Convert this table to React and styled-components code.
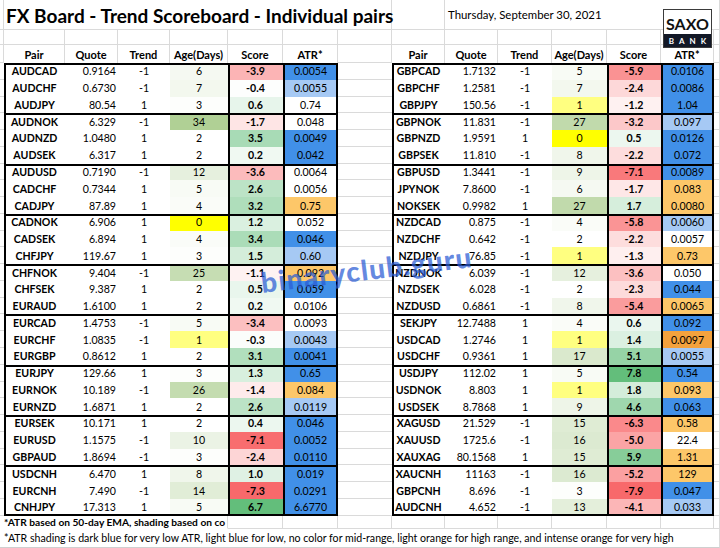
import styled, { createGlobalStyle } from 'styled-components'

const GlobalStyle = createGlobalStyle`
  *, *::before, *::after { box-sizing: border-box; }
  html, body { margin: 0; padding: 0; background: #ffffff; }
  body { font-family: Lato, 'Open Sans', sans-serif; color: #000000; }
`

// column widths of the spreadsheet, left stub .. right tail
const COLS = [4, 61, 53, 52, 58, 55, 55, 54, 53, 53, 54, 55, 54, 53, 6]
const ROW_H = 453 / 27
const GRID = '#dadada'

const LEFT = [
  ['AUDCAD', '0.9164', -1, 6, -3.9, '0.0054', 'D'],
  ['AUDCHF', '0.6730', -1, 7, -0.4, '0.0055', 'L'],
  ['AUDJPY', '80.54', 1, 3, 0.6, '0.74', ''],
  ['AUDNOK', '6.329', -1, 34, -1.7, '0.048', ''],
  ['AUDNZD', '1.0480', 1, 2, 3.5, '0.0049', 'D'],
  ['AUDSEK', '6.317', 1, 2, 0.2, '0.042', 'D'],
  ['AUDUSD', '0.7190', -1, 12, -3.6, '0.0064', ''],
  ['CADCHF', '0.7344', 1, 5, 2.6, '0.0056', ''],
  ['CADJPY', '87.89', 1, 4, 3.2, '0.75', 'O'],
  ['CADNOK', '6.906', 1, 0, 1.2, '0.052', ''],
  ['CADSEK', '6.894', 1, 4, 3.4, '0.046', 'D'],
  ['CHFJPY', '119.67', 1, 3, 1.5, '0.60', 'L'],
  ['CHFNOK', '9.404', -1, 25, -1.1, '0.092', 'O'],
  ['CHFSEK', '9.387', 1, 2, 0.5, '0.059', 'D'],
  ['EURAUD', '1.6100', 1, 2, 0.2, '0.0106', ''],
  ['EURCAD', '1.4753', -1, 5, -3.4, '0.0093', ''],
  ['EURCHF', '1.0835', -1, 1, -0.3, '0.0043', 'L'],
  ['EURGBP', '0.8612', 1, 2, 3.1, '0.0041', 'D'],
  ['EURJPY', '129.66', 1, 3, 1.3, '0.65', 'D'],
  ['EURNOK', '10.189', -1, 26, -1.4, '0.084', 'O'],
  ['EURNZD', '1.6871', 1, 2, 2.6, '0.0119', 'L'],
  ['EURSEK', '10.171', 1, 2, 0.4, '0.046', 'D'],
  ['EURUSD', '1.1575', -1, 10, -7.1, '0.0052', 'D'],
  ['GBPAUD', '1.8694', -1, 3, -2.4, '0.0110', 'D'],
  ['USDCNH', '6.470', 1, 8, 1.0, '0.019', 'D'],
  ['EURCNH', '7.490', -1, 14, -7.3, '0.0291', 'D'],
  ['CNHJPY', '17.313', 1, 5, 6.7, '6.6770', 'D'],
]

const RIGHT = [
  ['GBPCAD', '1.7132', -1, 5, -5.9, '0.0106', 'D'],
  ['GBPCHF', '1.2581', -1, 7, -2.4, '0.0086', 'D'],
  ['GBPJPY', '150.56', -1, 1, -1.2, '1.04', 'D'],
  ['GBPNOK', '11.831', -1, 27, -3.2, '0.097', 'L'],
  ['GBPNZD', '1.9591', 1, 0, 0.5, '0.0126', 'D'],
  ['GBPSEK', '11.810', -1, 8, -2.2, '0.072', 'D'],
  ['GBPUSD', '1.3441', -1, 9, -7.1, '0.0089', 'D'],
  ['JPYNOK', '7.8600', -1, 6, -1.7, '0.083', 'O'],
  ['NOKSEK', '0.9982', 1, 27, 1.7, '0.0080', 'O'],
  ['NZDCAD', '0.875', -1, 4, -5.8, '0.0060', 'L'],
  ['NZDCHF', '0.642', -1, 2, -2.2, '0.0057', ''],
  ['NZDJPY', '76.85', -1, 1, -1.3, '0.73', 'O'],
  ['NZDNOK', '6.039', -1, 12, -3.6, '0.050', ''],
  ['NZDSEK', '6.028', -1, 2, -2.3, '0.044', 'D'],
  ['NZDUSD', '0.6861', -1, 8, -5.4, '0.0065', 'O'],
  ['SEKJPY', '12.7488', 1, 4, 0.6, '0.092', 'D'],
  ['USDCAD', '1.2746', 1, 1, 1.4, '0.0097', 'X'],
  ['USDCHF', '0.9361', 1, 17, 5.1, '0.0055', 'L'],
  ['USDJPY', '112.02', 1, 5, 7.8, '0.54', 'D'],
  ['USDNOK', '8.803', 1, 1, 1.8, '0.093', 'O'],
  ['USDSEK', '8.7868', 1, 9, 4.6, '0.063', 'D'],
  ['XAGUSD', '21.529', -1, 15, -6.3, '0.58', 'O'],
  ['XAUUSD', '1725.6', -1, 16, -5.0, '22.4', ''],
  ['XAUXAG', '80.1568', 1, 15, 5.9, '1.31', 'O'],
  ['XAUCNH', '11163', -1, 16, -5.2, '129', 'O'],
  ['GBPCNH', '8.696', -1, 3, -7.9, '0.047', 'D'],
  ['AUDCNH', '4.652', -1, 13, -4.1, '0.033', 'L'],
]

const ATR_COLORS = {
  D: '#4190e8',
  L: '#a6c9f4',
  O: '#fdc769',
  X: '#f4a23d',
  '': '#ffffff',
}

const HEADERS = ['Pair', 'Quote', 'Trend', 'Age(Days)', 'Score', 'ATR*']

const mix = (a, b, t) => {
  const k = Math.max(0, Math.min(1, t))
  const c = a.map((v, i) => Math.round(v + (b[i] - v) * k))
  return `rgb(${c[0]}, ${c[1]}, ${c[2]})`
}

const WHITE = [255, 255, 255]

const ageColor = (v) => {
  if (v <= 2) return mix([255, 255, 0], WHITE, v / 2)
  return mix(WHITE, [176, 208, 149], (v - 2) / 32)
}

const scoreColor = (v, min, max) => {
  const mid = -0.5
  if (v < mid) return mix(WHITE, [248, 105, 107], (mid - v) / (mid - min))
  return mix(WHITE, [99, 190, 123], (v - mid) / (max - mid))
}

const Sheet = styled.div`
  position: relative;
  width: 720px;
  height: 548px;
  overflow: hidden;
  display: grid;
  grid-template-columns: ${COLS.map((w) => `${w}px`).join(' ')};
  grid-template-rows: 30px 15px 18px repeat(27, ${ROW_H}px) 13px 19px;
  background: #ffffff;
`

const Blank = styled.div`
  border-bottom: 1px solid ${GRID};
  border-right: ${(p) => (p.$noRight ? 'none' : `1px solid ${GRID}`)};
`

const Title = styled.div`
  grid-column: 2 / span 7;
  display: flex;
  align-items: center;
  padding: 2px 0 0 2px;
  font-size: 19px;
  font-weight: 700;
  white-space: nowrap;
  border-bottom: 1px solid ${GRID};
  border-right: 1px solid ${GRID};
`

const DateCell = styled.div`
  grid-column: 10 / span 3;
  display: flex;
  align-items: center;
  padding: 0 0 0 3px;
  font-size: 11.4px;
  white-space: nowrap;
  border-bottom: 1px solid ${GRID};
`

const Header = styled.div`
  display: flex;
  align-items: center;
  justify-content: center;
  padding-top: 1px;
  font-size: 11px;
  font-weight: 700;
  white-space: nowrap;
  border-right: 1px solid ${GRID};
`

const Cell = styled.div`
  display: flex;
  align-items: center;
  justify-content: ${(p) => p.$align};
  padding: 0 2px;
  font-size: 10.6px;
  font-weight: ${(p) => (p.$bold ? 700 : 400)};
  white-space: nowrap;
  background: ${(p) => p.$bg};
  box-shadow: ${(p) => p.$edges};
`

const Note = styled.div`
  grid-column: ${(p) => p.$cols};
  display: flex;
  align-items: center;
  padding-left: 4px;
  font-size: ${(p) => (p.$bold ? '10.2px' : '10.6px')};
  font-weight: ${(p) => (p.$bold ? 700 : 400)};
  white-space: nowrap;
  overflow: hidden;
  background: #ffffff;
  border-bottom: 1px solid ${(p) => (p.$bold ? '#ffffff' : '#cfcfcf')};
  border-right: 1px solid ${GRID};
`

const Logo = styled.div`
  position: absolute;
  left: 663px;
  top: 9px;
  width: 49px;
  display: flex;
  flex-direction: column;
  border: 1px solid #3b3b3b;
  background: #ffffff;
`

const LogoWord = styled.div`
  height: 24px;
  display: flex;
  align-items: center;
  justify-content: center;
  padding-top: 2px;
  font-size: 16px;
  font-weight: 700;
  color: #111111;
`

const LogoBand = styled.div`
  height: 13px;
  display: flex;
  align-items: center;
  justify-content: center;
  padding-left: 5px;
  background: #121826;
  color: #ffffff;
  font-size: 8px;
  font-weight: 700;
  letter-spacing: 5px;
`

const Watermark = styled.div`
  position: absolute;
  left: 261px;
  top: 268px;
  font-family: Lato, sans-serif;
  font-size: 28px;
  font-weight: 900;
  line-height: 28px;
  letter-spacing: 1.2px;
  color: rgba(42, 92, 212, 0.72);
  transform: rotate(-7deg);
  transform-origin: 0 50%;
  pointer-events: none;
  white-space: nowrap;
`

const edgesFor = (r, c) => {
  const s = []
  if (r % 3 === 0) s.push('inset 0 2px 0 #000')
  if (r === 26) s.push('inset 0 -2px 0 #000')
  if (c === 0 || c === 4 || c === 5) s.push('inset 2px 0 0 #000')
  if (c === 5) s.push('inset -2px 0 0 #000')
  return s.length ? s.join(', ') : 'none'
}

const rowCells = (row, r, range, side) => {
  const [pair, quote, trend, age, score, atr, cat] = row
  const key = `${side}-${r}`
  return [
    <Cell key={`${key}-p`} $align="center" $bold $bg="#ffffff" $edges={edgesFor(r, 0)}>
      {pair}
    </Cell>,
    <Cell key={`${key}-q`} $align="flex-end" $bg="#ffffff" $edges={edgesFor(r, 1)}>
      {quote}
    </Cell>,
    <Cell key={`${key}-t`} $align="center" $bg="#ffffff" $edges={edgesFor(r, 2)}>
      {trend}
    </Cell>,
    <Cell key={`${key}-a`} $align="center" $bg={ageColor(age)} $edges={edgesFor(r, 3)}>
      {age}
    </Cell>,
    <Cell
      key={`${key}-s`}
      $align="center"
      $bold
      $bg={scoreColor(score, range[0], range[1])}
      $edges={edgesFor(r, 4)}
    >
      {score.toFixed(1)}
    </Cell>,
    <Cell key={`${key}-r`} $align="center" $bg={ATR_COLORS[cat]} $edges={edgesFor(r, 5)}>
      {atr}
    </Cell>,
  ]
}

const rangeOf = (rows) => {
  const s = rows.map((r) => r[4])
  return [Math.min(...s), Math.max(...s)]
}

const App = () => {
  const leftRange = rangeOf(LEFT)
  const rightRange = rangeOf(RIGHT)

  return (
    <>
      <GlobalStyle />
      <Sheet>
        {/* title row */}
        <Blank />
        <Title>FX Board - Trend Scoreboard - Individual pairs</Title>
        <Blank />
        <DateCell>Thursday, September 30, 2021</DateCell>
        <Blank $noRight />
        <Blank $noRight />
        <Blank />

        {/* spacer row */}
        {COLS.map((_, i) => (
          <Blank key={`sp-${i}`} />
        ))}

        {/* header row */}
        <Blank />
        {HEADERS.map((h) => (
          <Header key={`hl-${h}`}>{h}</Header>
        ))}
        <Blank />
        {HEADERS.map((h) => (
          <Header key={`hr-${h}`}>{h}</Header>
        ))}
        <Blank />

        {/* data rows */}
        {LEFT.map((row, r) => [
          <Blank key={`stub-${r}`} $noRight />,
          ...rowCells(row, r, leftRange, 'l'),
          <Blank key={`gap-${r}`} $noRight />,
          ...rowCells(RIGHT[r], r, rightRange, 'r'),
          <Blank key={`tail-${r}`} />,
        ])}

        {/* notes */}
        <Note $cols="1 / span 5" $bold>
          *ATR based on 50-day EMA, shading based on co
        </Note>
        {COLS.slice(5).map((_, i) => (
          <Blank key={`n1-${i}`} />
        ))}
        <Note $cols="1 / -1">
          *ATR shading is dark blue for very low ATR, light blue for low, no color for mid-range,
          light orange for high range, and intense orange for very high
        </Note>

        <Logo>
          <LogoWord>SAXO</LogoWord>
          <LogoBand>BANK</LogoBand>
        </Logo>
        <Watermark>binaryclub.guru</Watermark>
      </Sheet>
    </>
  )
}

export default App
